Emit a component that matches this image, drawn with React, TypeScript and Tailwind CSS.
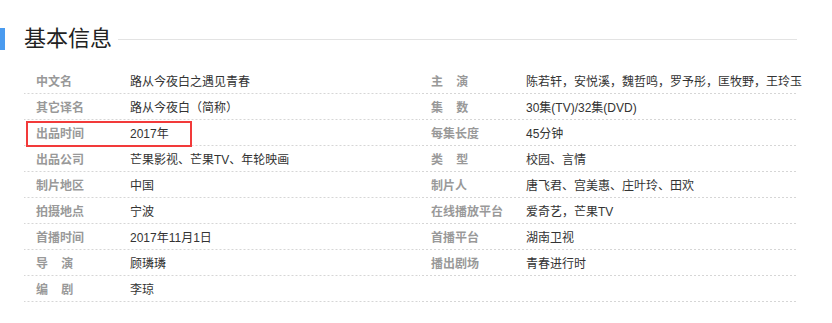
import React from "react";

type Item = { label: string; value: string };

const left: Item[] = [
  { label: "中文名", value: "路从今夜白之遇见青春" },
  { label: "其它译名", value: "路从今夜白（简称）" },
  { label: "出品时间", value: "2017年" },
  { label: "出品公司", value: "芒果影视、芒果TV、年轮映画" },
  { label: "制片地区", value: "中国" },
  { label: "拍摄地点", value: "宁波" },
  { label: "首播时间", value: "2017年11月1日" },
  { label: "导\u00a0\u00a0\u00a0\u00a0演", value: "顾璘璘" },
  { label: "编\u00a0\u00a0\u00a0\u00a0剧", value: "李琼" },
];

const right: Item[] = [
  { label: "主\u00a0\u00a0\u00a0\u00a0演", value: "陈若轩，安悦溪，魏哲鸣，罗予彤，匡牧野，王玲玉" },
  { label: "集\u00a0\u00a0\u00a0\u00a0数", value: "30集(TV)/32集(DVD)" },
  { label: "每集长度", value: "45分钟" },
  { label: "类\u00a0\u00a0\u00a0\u00a0型", value: "校园、言情" },
  { label: "制片人", value: "唐飞君、宫美惠、庄叶玲、田欢" },
  { label: "在线播放平台", value: "爱奇艺，芒果TV" },
  { label: "首播平台", value: "湖南卫视" },
  { label: "播出剧场", value: "青春进行时" },
  { label: "", value: "" },
];

function Row({ item, labelW }: { item: Item; labelW: string }) {
  return (
    <div className="flex h-[26px] items-center pl-3 pt-px bg-[linear-gradient(to_right,#d6d6d6_50%,transparent_50%)] bg-[length:4px_1px] bg-repeat-x bg-bottom">
      <div className={`${labelW} shrink-0 font-bold text-[#999] whitespace-nowrap`}>{item.label}</div>
      <div className="text-[#333] whitespace-nowrap">{item.value}</div>
    </div>
  );
}

export default function App() {
  return (
    <div
      className="w-[832px] h-[323px] bg-white text-[12px] leading-[24px]"
      style={{ fontFamily: '"Liberation Sans", "Noto Sans CJK SC", sans-serif' }}
    >
      <div className="flex items-center pt-[28px] w-[797px]">
        <div className="w-[5px] h-[22px] bg-[#4a9bef]" />
        <div className="ml-[19px] text-[22px] leading-[22px] text-[#222]">基本信息</div>
        <div className="ml-[6px] flex-1 h-px bg-[#e3e3e3]" />
      </div>
      <div className="relative flex mt-[18px] ml-[24px] w-[773px]">
        <div className="w-[395px] shrink-0">
          {left.map((it, i) => (
            <Row key={i} item={it} labelW="w-[94px]" />
          ))}
        </div>
        <div className="flex-1 min-w-0">
          {right.map((it, i) => (
            <Row key={i} item={it} labelW="w-[95px]" />
          ))}
        </div>
        <div className="absolute left-[2px] top-[53px] w-[166px] h-[26px] border-2 border-[#f23a3a]" />
      </div>
    </div>
  );
}
